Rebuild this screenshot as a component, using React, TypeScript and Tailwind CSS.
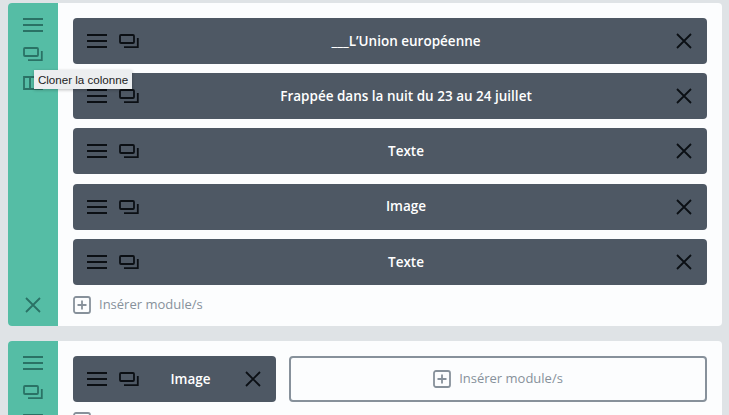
import React from "react";

const Burger = ({ className = "" }: { className?: string }) => (
  <svg width="20" height="14" viewBox="0 0 20 14" fill="none" stroke="currentColor" strokeWidth="1.8" className={className}>
    <path d="M0 1h20M0 7h20M0 13h20" />
  </svg>
);
const Clone = ({ className = "" }: { className?: string }) => (
  <svg width="20" height="14" viewBox="0 0 20 14" fill="none" stroke="currentColor" strokeWidth="1.8" className={className}>
    <rect x="1" y="1" width="14" height="8" rx="1" />
    <path d="M18.8 4v9.1H5" />
  </svg>
);
const Cross = ({ className = "" }: { className?: string }) => (
  <svg width="16" height="16" viewBox="0 0 16 16" fill="none" stroke="currentColor" strokeWidth="1.8" className={className}>
    <path d="M1 1l14 14M15 1L1 15" />
  </svg>
);
const Columns = ({ className = "" }: { className?: string }) => (
  <svg width="20" height="14" viewBox="0 0 20 14" fill="none" stroke="currentColor" strokeWidth="1.8" className={className}>
    <path d="M1 1h18v12H1zM7 1v12M13 1v12" />
  </svg>
);
const Plus = () => (
  <svg width="18" height="18" viewBox="0 0 18 18" fill="none" stroke="currentColor" strokeWidth="1.8" className="text-[#87919b]">
    <rect x="1" y="1" width="16" height="16" rx="2" />
    <path d="M9 4.5v9M4.5 9h9" />
  </svg>
);

const Insert = ({ className = "" }: { className?: string }) => (
  <div className={`flex items-center gap-[8px] text-[13px] text-[#87919b] ${className}`}>
    <Plus />
    <span>Insérer module/s</span>
  </div>
);

const Module = ({ title, className = "" }: { title: string; className?: string }) => (
  <div className={`flex h-[46px] items-center rounded-[4px] bg-[#4e5864] pl-[14px] pr-[15px] ${className}`}>
    <Burger className="shrink-0 text-[#0b0f14]" />
    <Clone className="ml-[12px] shrink-0 text-[#0b0f14]" />
    <span className="flex-1 pr-[3px] text-center text-[13.5px] font-semibold text-white">{title}</span>
    <Cross className="shrink-0 text-[#0b0f14]" />
  </div>
);

const Side = ({ children, className = "" }: { children: React.ReactNode; className?: string }) => (
  <div className={`flex w-[50px] shrink-0 flex-col items-center rounded-l-[4px] bg-[#55bda5] pt-[15px] text-[#2a7265] ${className}`}>
    {children}
  </div>
);

export default function App() {
  return (
    <div className="relative h-[415px] w-[729px] overflow-hidden bg-[#dfe3e6] pl-[8px] pr-[7px] pt-[3px] font-['Open_Sans',sans-serif]">
      <div className="flex h-[323px] rounded-[4px] bg-[#fcfdfe]">
        <Side>
          <Burger />
          <Clone className="mt-[15px]" />
          <Columns className="mt-[15px]" />
          <Cross className="mb-[13px] mt-auto" />
        </Side>
        <div className="flex-1 pl-[15px] pr-[15px] pt-[15px]">
          <div className="flex flex-col gap-[9.2px]">
            <Module title="___L’Union européenne" />
            <Module title="Frappée dans la nuit du 23 au 24 juillet" />
            <Module title="Texte" />
            <Module title="Image" />
            <Module title="Texte" />
          </div>
          <Insert className="mt-[10px]" />
        </div>
      </div>

      <div className="mt-[15px] flex h-[100px] rounded-[4px] bg-[#fcfdfe]">
        <Side>
          <Burger />
          <Clone className="mt-[15px]" />
          <Columns className="mt-[15px]" />
        </Side>
        <div className="flex-1 px-[15px] pt-[15px]">
          <div className="flex gap-[13px]">
            <Module title="Image" className="w-[203px]" />
            <div className="flex h-[46px] flex-1 items-center justify-center rounded-[4px] border-2 border-[#87919b]">
              <Insert />
            </div>
          </div>
          <Insert className="mt-[9px]" />
        </div>
      </div>

      <div className="absolute left-[34px] top-[70px] flex h-[19px] w-[98px] items-center justify-center bg-[#eceef0] font-['Liberation_Sans',sans-serif] text-[11.6px] text-[#222] shadow-[0_1px_3px_rgba(0,0,0,0.25)]">
        Cloner la colonne
      </div>
    </div>
  );
}
